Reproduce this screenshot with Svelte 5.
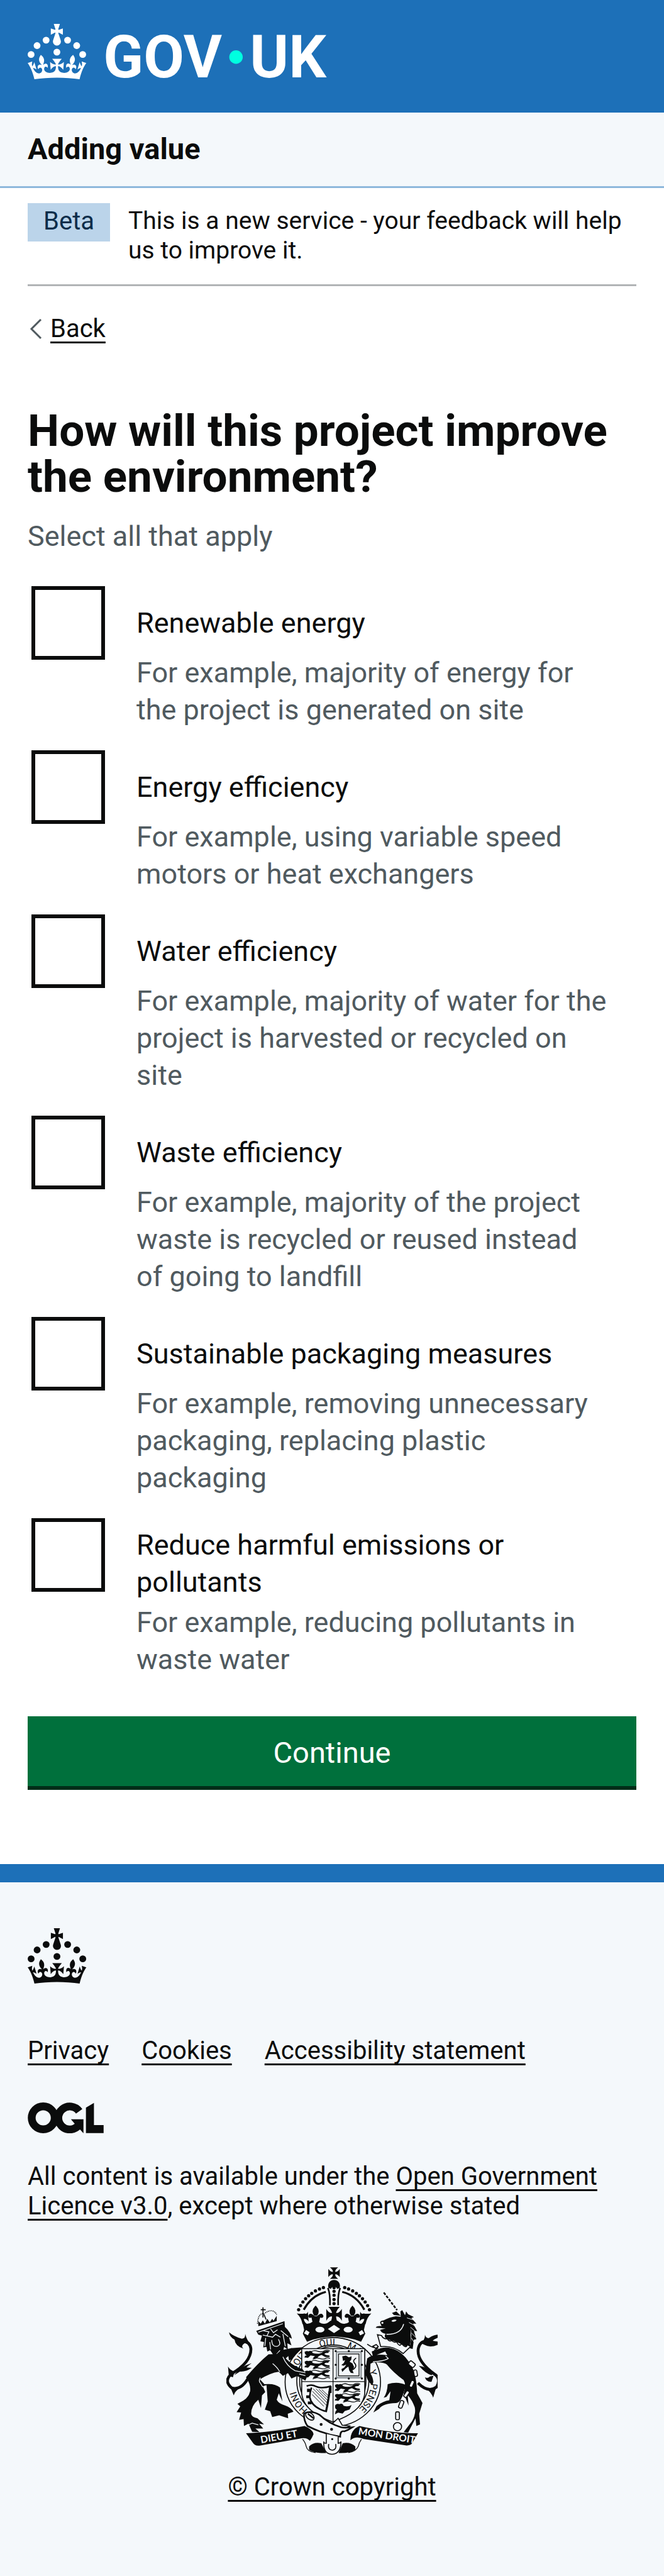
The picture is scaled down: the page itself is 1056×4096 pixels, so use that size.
<script>
  const options = [
    { id: 'renewable', label: 'Renewable energy', hint: 'For example, majority of energy for the project is generated on site' },
    { id: 'energy', label: 'Energy efficiency', hint: 'For example, using variable speed motors or heat exchangers' },
    { id: 'water', label: 'Water efficiency', hint: 'For example, majority of water for the project is harvested or recycled on site' },
    { id: 'waste', label: 'Waste efficiency', hint: 'For example, majority of the project waste is recycled or reused instead of going to landfill' },
    { id: 'packaging', label: 'Sustainable packaging measures', hint: 'For example, removing unnecessary packaging, replacing plastic packaging' },
    { id: 'emissions', label: 'Reduce harmful emissions or pollutants', hint: 'For example, reducing pollutants in waste water' }
  ];
  const links = ['Privacy', 'Cookies', 'Accessibility statement'];
  const pearls = [[558, 174], [539, 181], [519, 190], [501, 202], [486, 214], [471, 228], [458, 244], [446, 262], [437, 282]];
  const motto = [
    { word: 'HONI', at: 11.5 }, { word: 'SOIT', at: 29.5 }, { word: 'QUI', at: 44.5 },
    { word: 'MAL', at: 56 }, { word: 'Y', at: 70 }, { word: 'PENSE', at: 75.5 }
  ];
</script>

{#snippet crown()}
  <circle cx="20" cy="17.6" r="3.7" />
  <circle cx="10.2" cy="23.5" r="3.7" />
  <circle cx="3.7" cy="33.2" r="3.7" />
  <circle cx="31.7" cy="30.6" r="3.7" />
  <circle cx="43.3" cy="17.6" r="3.7" />
  <circle cx="53.2" cy="23.5" r="3.7" />
  <circle cx="59.7" cy="33.2" r="3.7" />
  <path d="M33.1,9.8c.2-.1.3-.3.5-.5l4.6,2.4v-6.8l-4.6,1.5c-.1-.2-.3-.3-.5-.5l1.9-5.9h-6.7l1.9,5.9c-.2.1-.3.3-.5.5l-4.6-1.5v6.8l4.6-2.4c.1.2.3.3.5.5l-2.6,8c-.9,2.8,1.2,5.7,4.1,5.7h0c3,0,5.1-2.9,4.1-5.7l-2.6-8ZM37,37.9s-3.4,3.8-4.1,6.1c2.2,0,4.2-.5,6.4-2.8l-.7,8.5c-2-2.8-4.4-4.1-5.7-3.8.1,3.1.5,6.7,5.8,7.2,3.7.3,6.7-1.5,7-3.8.4-2.6-2-4.3-3.7-1.6-1.4-4.5,2.4-6.1,4.9-3.2-1.9-4.5-1.8-7.7,2.4-10.9,3,4,2.6,7.3-1.2,11.1,2.4-1.3,6.2,0,4,4.6-1.2-2.8-3.7-2.2-4.2.2-.3,1.7.7,3.7,3,4.2,1.9.3,4.7-.9,7-5.9-1.3,0-2.4.7-3.9,1.7l2.4-8c.6,2.3,1.4,3.7,2.2,4.5.6-1.6.5-2.8,0-5.3l5,1.8c-2.6,3.6-5.2,8.7-7.3,17.5-7.4-1.1-15.7-1.7-24.5-1.7h0c-8.8,0-17.1.6-24.5,1.7-2.1-8.9-4.7-13.9-7.3-17.5l5-1.8c-.5,2.5-.6,3.7,0,5.3.8-.8,1.6-2.3,2.2-4.5l2.4,8c-1.5-1-2.6-1.7-3.9-1.7,2.3,5,5.2,6.2,7,5.9,2.3-.4,3.3-2.4,3-4.2-.5-2.4-3-3.1-4.2-.2-2.2-4.6,1.6-6,4-4.6-3.7-3.7-4.2-7.1-1.2-11.1,4.2,3.2,4.3,6.4,2.4,10.9,2.5-2.8,6.3-1.3,4.9,3.2-1.8-2.7-4.1-1-3.7,1.6.3,2.3,3.3,4.1,7,3.8,5.4-.5,5.7-4.2,5.8-7.2-1.3-.2-3.7,1-5.7,3.8l-.7-8.5c2.2,2.3,4.2,2.7,6.4,2.8-.7-2.3-4.1-6.1-4.1-6.1h10.6Z" />
{/snippet}

{#snippet halfCrown()}
  {#each pearls as [x, y]}<circle cx={x} cy={y} r="8" />{/each}
  <path class="line w10" d="M570 195Q500 212 462 282" />
  <path class="line w8" d="M580 176Q592 205 590 260" />
  <path d="M428 300Q450 304 466 300Q478 306 482 291L486 340Q474 324 462 328Q466 345 478 352L456 352Q450 320 428 300Z" />
  <path d="M520 262Q546 287 527 312H514Q494 287 520 262Z" />
  <path d="M516 314Q492 290 484 312Q484 326 500 320Q502 338 510 352H532Q540 338 542 320Q558 326 558 312Q550 290 526 314Z" />
{/snippet}

{#snippet passant()}
  <path d="M465 490q8-10 20-5q16-6 20 8q22 8 44 0q16-14 38-8l-6 8q-16-2-18 6q12 8 24 6l2 8-22 0-18-10q-18 6-20 14l-14 6-8-6 10-8-22-4-12 12-18-2 4-8 8-2q-12-6-10-18z" />
  <path class="line w4" d="M500 486q14-8 28-2q20 8 36-2q14-4 26 2M506 524q18-10 34-4q18 6 28 0q10-6 22 0" />
{/snippet}

<header class="masthead">
  <a class="brand" href="#home" aria-label="GOV.UK">
    <svg class="wordmark" viewBox="0 0 324 60">
      {@render crown()}
      <text class="name" x="82" y="58">GOV</text>
      <circle class="dot" cx="226" cy="36" r="7.3" />
      <text class="name" x="241" y="58">UK</text>
    </svg>
  </a>
</header>
<nav class="service" aria-label="Service"><a href="#service">Adding value</a></nav>

<div class="phase">
  <strong class="tag">Beta</strong>
  <span class="phase-text">This is a new service - your feedback will help us to improve it.</span>
</div>

<main>
  <a class="back" href="#back">
    <svg class="chevron" viewBox="0 0 20 34"><path d="M18 2L3 17L18 32" /></svg>
    <span>Back</span>
  </a>
  <form>
    <fieldset aria-describedby="project-hint">
      <legend><h1>How will this project improve the environment?</h1></legend>
      <p class="hint" id="project-hint">Select all that apply</p>
      <div class="options">
        {#each options as option}
          <div class="option">
            <input type="checkbox" id={option.id} aria-describedby="{option.id}-hint" />
            <div class="copy">
              <label for={option.id}>{option.label}</label>
              <p class="hint" id="{option.id}-hint">{option.hint}</p>
            </div>
          </div>
        {/each}
      </div>
    </fieldset>
    <button type="button">Continue</button>
  </form>
</main>

<footer>
  <svg class="crown" viewBox="0 0 64 60">{@render crown()}</svg>
  <ul>
    {#each links as link}<li><a href="#{link}">{link}</a></li>{/each}
  </ul>
  <svg class="ogl" viewBox="0 0 369 150" role="img" aria-label="OGL">
    <circle class="ring" cx="75" cy="75" r="56" />
    <path class="ring" d="M250 43A56 56 0 1 0 247 112" />
    <path d="M210 82H271V150L254 132L233 113L228 103Z" />
    <path d="M283 25L322 2V110H369V149H283Z" />
  </svg>
  <p class="licence">
    All content is available under the <a href="#ogl">Open Government Licence v3.0</a>, except where otherwise stated
  </p>
  <div class="copyright">
    <svg class="crest" viewBox="84 72 1032 920" aria-hidden="true">
      <!-- garter -->
      <path d="M385 500L400 470L460 465L440 510L390 530Z" />
      <ellipse class="field w5" cx="604" cy="635" rx="233" ry="217" />
      <ellipse class="line w5" cx="604" cy="630" rx="176" ry="176" />
      <ellipse class="line w5" cx="604" cy="630" rx="162" ry="168" />
      <path id="garter" class="none" d="M604 814A186 179 0 0 1 604 456A186 179 0 0 1 604 814" />
      {#each motto as { word, at }}
        <text class="garter-text"><textPath href="#garter" startOffset="{at}%">{word}</textPath></text>
      {/each}

      <!-- crown -->
      <path d="M590 75h40q-16 12-14 22q10 2 22-14v40q-12-16-22-14q-2 10 14 22h-40q16-12 14-22q-10-2-22 14v-40q12 16 22 14q2-10-14-22z" />
      <path d="M583 176A29 29 0 1 1 637 176L625 180A16 16 0 0 0 595 180Z" />
      {#each [174, 192, 211, 232, 252] as y}<circle cx="610" cy={y} r="8" />{/each}
      {@render halfCrown()}
      <g transform="translate(1220 0) scale(-1 1)">{@render halfCrown()}</g>
      <path d="M582 268H638Q622 285 620 298Q635 300 648 278V336Q635 312 620 315Q620 332 632 350H588Q600 332 600 315Q585 312 572 336V278Q585 300 600 298Q598 285 582 268Z" />
      <path d="M456 345Q484 358 506 340L534 340Q562 364 592 336L628 336Q658 364 686 340L714 340Q736 358 764 345L756 380L762 400L742 438Q680 414 610 413Q540 414 478 438L458 400L464 380Z" />
      <ellipse class="bg" cx="541" cy="379" rx="22" ry="14" />
      <ellipse class="bg" cx="679" cy="379" rx="22" ry="14" />
      <path class="bg" d="M610 356L640 376L610 396L580 376Z" />
      <path class="field w4" d="M473 378L493 391L483 410L460 398ZM747 378L727 391L737 410L760 398Z" />

      <!-- shield -->
      <path class="field w5" d="M452 472H760V690Q752 780 604 830Q460 780 452 690Z" />
      <path class="line w4" d="M605 472V830M452 633H760" />
      <g>{@render passant()}</g>
      <g transform="translate(0 48)">{@render passant()}</g>
      <g transform="translate(0 96)">{@render passant()}</g>
      <g transform="translate(148 162)">{@render passant()}</g>
      <g transform="translate(148 210)">{@render passant()}</g>
      <path transform="translate(148 258)" d="M468 490q8-10 20-5q16-6 20 8q22 8 40-4l-10 22-24 8-10 12-22-4-16 8 4-16 6-6q-12-6-8-23z" />
      <rect class="line grey" x="622" y="488" width="120" height="126" />
      <rect class="line w4" x="632" y="498" width="100" height="107" />
      {#each [[618, 484], [682, 484], [746, 484], [618, 551], [746, 551], [618, 618], [682, 618], [746, 618]] as [x, y]}
        <circle cx={x} cy={y} r="5" />
      {/each}
      <path d="M650 510l18-4 14 8 14-4-2 16-8 10 14 8 8 18-8 16 6 14-14-2-8-12-4-18-12 8-18 18-4-14 14-8 10-14-14 6-10-4 12-10 6-14-10 4z" />
      <path class="line w5" d="M700 575Q728 560 708 540Q700 530 718 518" />
      <path class="line w8" d="M476 655Q500 645 520 656Q550 670 596 655M500 662Q490 690 492 712Q500 756 566 778" />
      <path d="M478 668h16v16h-16zM474 700h18v14h-18zM482 730h18v14h-18zM586 655h12v34h-16z" />
      <path class="line w10" d="M588 680Q580 740 570 782" />
      <path class="line w3" d="M508 668L580 740M522 668L582 728M536 670L584 716M550 672L584 704M504 680L576 752M503 696L560 754" />

      <!-- lion -->
      <path class="line w14" d="M196 606Q160 678 110 664Q70 630 108 596Q204 540 204 474Q200 436 160 436" />
      <path d="M97 392Q120 412 160 424Q178 422 176 400Q184 430 200 448Q176 440 165 452Q156 462 168 472Q128 460 124 428Q100 415 97 392ZM122 602Q150 560 208 543Q190 556 182 564L208 566Q180 586 150 584ZM92 560Q104 580 124 584L116 612L96 606ZM104 662L150 665Q126 680 120 700Z" />
      <path d="M290 500Q236 545 180 612Q205 650 200 680Q192 712 166 726L138 742L152 754L134 782L156 784L146 820L168 816L170 850L192 838L210 878L246 880L226 862L264 862L244 838L268 842L236 812Q206 806 205 790Q206 750 240 722L253 762L258 700L274 684L262 656L280 650L286 730L272 770L298 778L308 806L342 798L386 812L384 790L412 780Q400 760 372 750Q340 742 330 722L340 690L358 730L346 662Q320 640 270 646L248 622Q300 590 340 585L360 605L385 592L402 618L430 606L470 628L480 604L456 572Q412 560 374 520L425 474L402 470L350 480L330 498Z" />
      <path class="line light w4" d="M250 614Q240 630 250 640L262 660M310 545Q330 560 345 585M360 512Q380 560 420 580L470 590M180 850l30-14 30 8M440 596l30 8" />
      <path d="M230 385L368 338L370 366Q398 390 404 424L390 416Q396 440 402 456L382 446L384 476L366 464L360 490L344 480L318 510L298 480L284 486L280 464L264 466L268 440L250 436L258 408L240 404Z" />
      <path class="line light w4" d="M240 392L360 350M264 384l28 6-10 20-20-4M300 376l14 18 20-14M284 410l26 6 14-14 24 14M306 430q0 36 28 30q20-8 4-34M276 420l-4 40M360 400l12 60M350 384l36 30M296 440l4 36" />
      <path d="M240 362L240 338L252 350L262 334L272 350L284 326L296 344L308 326L314 336L330 312V338Z" />
      <path class="line w3 dotted" d="M236 350Q240 296 268 302Q310 270 330 306" />
      <path class="line w5" d="M263 270V320M252 282H276M268 306L278 330" />

      <!-- unicorn -->
      <path class="line w8 horn" d="M853 198L918 284" />
      <path d="M893 298L914 290L936 312L902 308ZM835 346Q834 336 852 334Q882 318 912 314L936 316L934 290L943 284L956 308Q988 340 984 404Q988 446 975 470Q930 440 868 426Q850 414 862 400Q840 396 835 380L862 374L814 370Q816 360 842 362Z" />
      <path d="M962 290L972 304L1000 318L988 322L1012 350L996 350L1016 386L1000 386L1012 426L1000 428L994 474L978 470Q1004 380 956 312Z" />
      <path class="line light w3" d="M966 322L1000 332M976 344L1008 362M984 368L1012 392M988 396L1010 418M988 420L1004 446" />
      <path class="line light w5" d="M866 402Q936 404 950 352" />
      <path class="bg" d="M890 336q12-10 26-4q-8 12-22 8z" />
      <circle class="bg" cx="846" cy="346" r="5" />
      <path class="field w5" d="M822 404L838 462Q900 456 948 496L984 462L968 452Q964 470 950 458Q940 444 932 456Q920 452 916 438Q904 446 892 432Q880 440 870 424Q850 426 842 408Z" />
      <path d="M838 470Q880 460 922 484Q960 506 990 560Q1012 600 1016 690L1042 738L1026 790L1030 842L1012 850L1008 812Q990 846 972 882L950 880L990 828Q1012 790 1004 758Q990 720 970 700L974 750L960 716L950 690Q964 650 950 626Q900 590 868 550Q852 536 800 540L788 546L786 590Q800 610 802 634L798 650Q778 640 768 608L760 596L772 520Q800 494 870 504L860 486L800 510L794 486Z" />
      <path d="M872 646Q920 630 962 650L946 700Q930 740 912 738Q850 740 830 766L802 784L818 752Q850 728 880 724L886 680L866 708L852 712Q870 690 872 646Z" />
      <path class="line light w4" d="M800 536Q850 534 876 520M875 520L862 508" />
      <path class="line w5" d="M772 450Q800 470 826 470M800 460l16-8 10 10-12 10zM806 480l14-6" />
      <g class="chain">
        <rect x="-11" y="-16" width="22" height="32" rx="7" transform="translate(990 548) rotate(-50)" />
        <rect x="-8" y="-16" width="16" height="32" rx="7" transform="translate(1008 592) rotate(-10)" />
        <rect x="-8" y="-17" width="16" height="34" rx="7" transform="translate(990 644) rotate(24)" />
        <rect x="-8" y="-17" width="16" height="34" rx="7" transform="translate(964 694) rotate(34)" />
        <rect x="-9" y="-19" width="18" height="38" rx="7" transform="translate(938 744) rotate(20)" />
        <rect x="-9" y="-19" width="18" height="38" rx="5" transform="translate(920 800)" />
        <circle cx="920" cy="853" r="20" />
      </g>
      <path class="line w14" d="M1020 640Q1070 690 1110 660Q1136 620 1100 596Q1010 530 1022 470Q1030 436 1060 436" />
      <path d="M1054 404Q1060 424 1074 420Q1100 402 1124 404V416Q1100 424 1092 434L1120 438V452Q1080 470 1052 454Q1040 446 1028 450Q1056 430 1054 404ZM1024 556Q1060 560 1098 592L1086 602Q1060 596 1024 556ZM1054 612Q1060 636 1086 634L1096 604L1078 608Q1068 620 1054 612ZM1064 670L1108 664L1094 712Q1088 690 1064 670Z" />

      <!-- belt and motto ribbon -->
      <path d="M180 885Q300 882 466 850Q506 866 510 890Q504 906 492 922Q474 902 440 912L250 945Q224 950 212 930Z" />
      <path d="M1020 885Q900 888 734 850Q690 868 690 920Q716 896 756 914L964 945Q988 946 996 926Z" />
      <path d="M488 950Q510 926 548 934L572 982Q510 984 488 966ZM714 950Q690 926 652 934L632 982Q690 984 714 966Z" />
      <path class="line w4" d="M456 914Q470 930 474 950Q480 976 520 980M744 914Q732 930 728 950Q716 976 680 980" />
      <path class="field w5" d="M604 836L630 812L650 846L690 850Q640 866 640 900L560 880Q500 850 478 830Z" />
      <path class="field w8" d="M480 850Q460 820 464 788Q500 772 540 796Q580 836 644 856Q660 860 700 856Q680 870 660 876Q640 870 640 902Q560 890 480 850Z" />
      <ellipse class="line w5" cx="492" cy="802" rx="24" ry="15" transform="rotate(40 492 802)" />
      <path class="line w8" d="M482 790L510 812" />
      <circle cx="547" cy="842" r="7" />
      <circle cx="598" cy="866" r="7" />
      <path class="field w5" d="M572 888V934Q558 934 560 926Q556 986 600 988Q644 986 644 926Q642 934 630 934V902" />
      <path class="line w5" d="M584 938Q578 966 602 968Q624 966 618 938" />
      <circle cx="601" cy="914" r="5" />
      <text class="ribbon-text" transform="translate(254 934) rotate(-10)">DIEU ET</text>
      <text class="ribbon-text" transform="translate(727 891) rotate(9)">MON DROIT</text>
    </svg>
    <a href="#copyright">© Crown copyright</a>
  </div>
</footer>

<style>
  :global(body) {
    margin: 0;
    background: #f4f8fb;
    color: #0b0c0c;
    font-family: Roboto, "Liberation Sans", Arial, sans-serif;
    font-size: 40px;
    line-height: 47px;
  }
  :global(#app) { background: #fff; }
  a {
    color: inherit;
    text-decoration: underline;
    text-decoration-thickness: 3px;
    text-underline-offset: 7px;
    text-decoration-skip-ink: none;
  }
  svg { display: block; fill: currentColor; }
  h1, p, ul, fieldset, legend { margin: 0; padding: 0; border: 0; }
  .masthead { padding: 38px 44px 53px; background: #1d70b8; color: #fff; }
  .brand { display: inline-block; vertical-align: top; }
  .wordmark { width: 475px; height: 88px; overflow: visible; }
  .name { font-size: 64px; font-weight: 700; }
  .dot { fill: #00ffe0; }
  .service {
    padding: 28px 44px 30px;
    border-bottom: 3px solid #8eb8dc;
    background: #f4f8fb;
    font-size: 47px;
    line-height: 59px;
    font-weight: 700;
  }
  .service a { text-decoration: none; }
  .phase {
    display: flex;
    align-items: flex-start;
    gap: 29px;
    margin: 0 44px;
    padding: 24px 0 30px;
    border-bottom: 3px solid #b1b4b6;
  }
  .tag { padding: 5px 25px 9px; background: #bbd4ea; color: #0c2d4a; font-weight: 400; }
  .phase-text { padding-top: 5px; font-size: 39px; }
  main { padding: 44px 44px 124px; }
  .back { display: inline-flex; align-items: center; gap: 13px; vertical-align: top; text-decoration: none; }
  .back span {
    text-decoration: underline;
    text-decoration-thickness: 3px;
    text-underline-offset: 7px;
  }
  .chevron { width: 20px; height: 34px; margin-left: 3px; }
  .chevron path { fill: none; stroke: #505a5f; stroke-width: 3; }
  form { margin-top: 102px; font-size: 45px; line-height: 59px; }
  fieldset { min-width: 0; }
  h1 { font-size: 71px; line-height: 73px; font-weight: 700; }
  .hint { color: #505a5f; }
  fieldset > .hint { margin-top: 29px; }
  .options { display: flex; flex-direction: column; gap: 32px; margin-top: 47px; }
  .option { display: flex; align-items: flex-start; }
  input {
    appearance: none;
    flex: none;
    width: 117px;
    height: 117px;
    margin: 3px 50px 0 6px;
    border: 6px solid #0b0c0c;
    background: #fff;
  }
  .copy { flex: 1; padding-right: 45px; }
  .copy .hint { margin-top: -11px; }
  label { display: flex; align-items: center; box-sizing: border-box; min-height: 122px; padding: 16px 0; }
  button {
    display: block;
    width: 100%;
    margin-top: 61px;
    padding: 28px 24px 24px;
    border: 0;
    background: #00703c;
    box-shadow: 0 6px 0 #002d18;
    color: #fff;
    font: inherit;
    font-size: 47px;
  }
  footer { padding: 73px 44px 119px; border-top: 29px solid #1d70b8; background: #f4f8fb; }
  .crown { width: 94px; height: 88px; }
  ul { display: flex; flex-wrap: wrap; gap: 0 52px; margin-top: 83px; list-style: none; }
  .ogl { width: 121px; height: 49px; margin-top: 59px; }
  .ring { fill: none; stroke: currentColor; stroke-width: 38; }
  .licence { margin-top: 45px; }
  .copyright { display: flex; flex-direction: column; align-items: center; margin-top: 73px; }
  .crest { width: 336px; height: 300px; margin-bottom: 27px; }
  .line { fill: none; stroke: currentColor; }
  .light { stroke: #f4f8fb; }
  .field { fill: #f4f8fb; stroke: currentColor; }
  .bg { fill: #f4f8fb; }
  .none { fill: none; }
  .grey { stroke: #8a9095; stroke-width: 7; }
  .w3 { stroke-width: 3; }
  .w4 { stroke-width: 4; }
  .w5 { stroke-width: 5; }
  .w8 { stroke-width: 8; }
  .w10 { stroke-width: 10; }
  .w14 { stroke-width: 14; }
  .dotted { stroke-dasharray: 4 4; stroke-width: 5; }
  .horn { stroke-dasharray: 14 6; }
  .chain { fill: #f4f8fb; stroke: currentColor; stroke-width: 5; }
  .garter-text { font-size: 46px; }
  .ribbon-text { fill: #f4f8fb; font-family: Lato, sans-serif; font-size: 48px; font-weight: 700; }
</style>
